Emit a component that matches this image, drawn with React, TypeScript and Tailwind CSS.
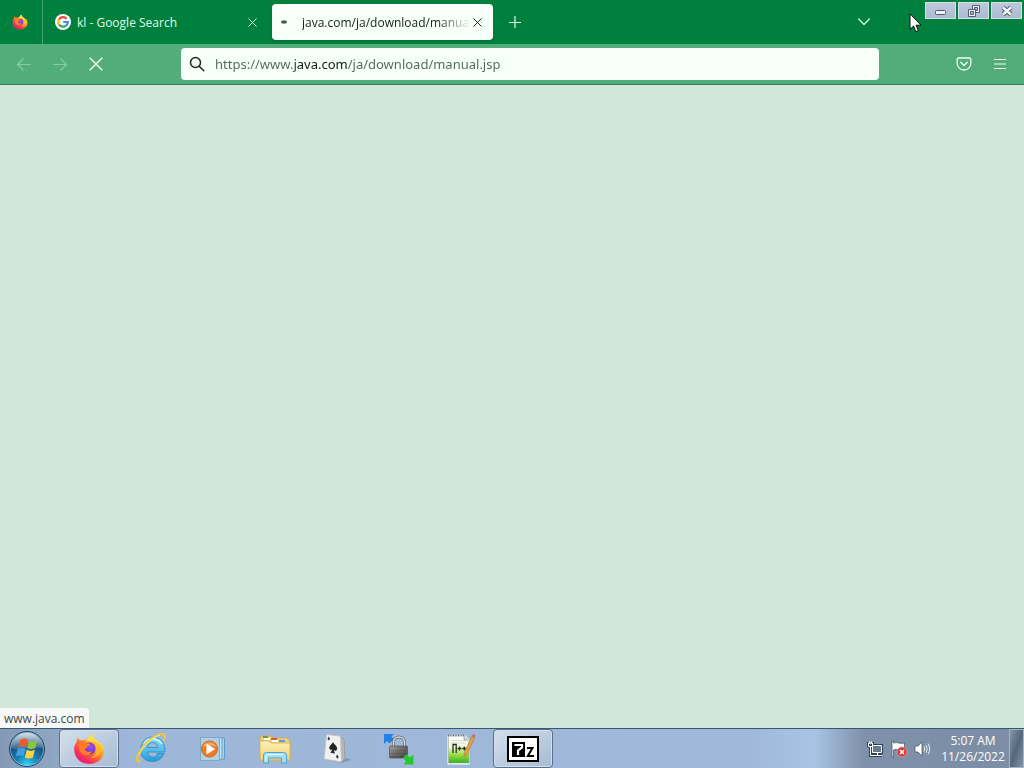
import { useState } from "react";
import type { ReactNode } from "react";

function FirefoxIcon({ className }: { className: string }) {
  return (
    <svg viewBox="0 0 32 32" className={className} aria-hidden="true">
      <defs>
        <linearGradient id="fxBody" x1="0.85" y1="0.1" x2="0.2" y2="0.95">
          <stop offset="0" stopColor="#fff04a" />
          <stop offset="0.3" stopColor="#ffb52a" />
          <stop offset="0.55" stopColor="#ff6a2e" />
          <stop offset="0.8" stopColor="#f5305a" />
          <stop offset="1" stopColor="#e01a80" />
        </linearGradient>
        <radialGradient id="fxGlobe" cx="0.6" cy="0.4" r="0.7">
          <stop offset="0" stopColor="#a04cf0" />
          <stop offset="1" stopColor="#5b34b8" />
        </radialGradient>
      </defs>
      <path
        d="M19.5 1c-.6 2.600.4 4 2.400 5.700C25.200 9 27 10 27.300 12.500c.4-1 .3-2.500 0-3.500 2.700 3 4 6.500 3.700 10C30.300 26 24 31 16.300 31 8 31 1.200 25 1.200 16.500c0-3.200 1-6 2.600-8 0-1.500.5-3 1.400-4 .2 1.300.8 2 1.600 2.600 1.300-.3 2.700-.2 3.800.2 1.500-1 2.800-1.300 4-1.300-.9 1-1.300 1.700-1.200 2.300 1.500-1.600 3.300-5.800 6.100-7.300z"
        fill="url(#fxBody)"
      />
      <circle cx="16.500" cy="15.500" r="6" fill="url(#fxGlobe)" />
      <path
        d="M6.500 9.500c2.500-1.600 5.500-1.400 7.200.8 1.500.2 3 .3 3.800.6-.2 1.300-2 2.200-3 2.700-.3 1.500-1.700 1.900-2.500 2.600 1 3 4.400 3.300 7 1.700-1 3.300-4.400 5.200-7.700 4.100C7 20.500 4.500 15 6.500 9.500z"
        fill="#ff7b2c"
      />
      <path
        d="M18 8.500c4 .8 6 4 5.700 8-.2 4-2.400 7.700-6.400 8.200 5.700 1.300 10-2.700 10.500-8.200C28 10.500 23 9 20.500 5 19.500 6.500 19 7.500 18 8.500z"
        fill="#ffb92d"
        opacity=".85"
      />
      <path d="M14 8c1-2.800 2.800-5.500 5.500-7-.6 2.600.4 4 2.400 5.700C25 9 26.500 10 27.300 12.500 24 9 20 8 14 8z" fill="#ffe042" />
    </svg>
  );
}

function GoogleIcon() {
  return (
    <svg viewBox="0 0 16 16" className="size-4 shrink-0" aria-hidden="true">
      <circle cx="8" cy="8" r="8" fill="#fff" />
      <g fill="none" strokeWidth="2.200">
        <path d="M4 5.500A4.800 4.800 0 0 1 11.600 4.700" stroke="#e94335" />
        <path d="M4 5.500A4.800 4.800 0 0 0 4 10.500" stroke="#f9bc05" />
        <path d="M4 10.500A4.800 4.800 0 0 0 11 11.700" stroke="#34a753" />
        <path d="M11 11.700A4.800 4.800 0 0 0 12.800 8H8.200" stroke="#4285f3" />
      </g>
    </svg>
  );
}

function Cross({ className }: { className: string }) {
  return (
    <svg viewBox="0 0 12 12" className={className} fill="none" stroke="currentColor" strokeWidth="1.300" strokeLinecap="round" aria-hidden="true">
      <path d="M1 1l10 10M11 1L1 11" />
    </svg>
  );
}

function ArrowIcon({ forward = false }: { forward?: boolean }) {
  return (
    <svg viewBox="0 0 16 16" className="size-4" fill="none" stroke="currentColor" strokeWidth="1.200" strokeLinecap="round" strokeLinejoin="round" aria-hidden="true">
      <path d={forward ? "M1.500 8.500h13M9 3L14.500 8.500 9 14" : "M14.500 8.500h-13M7 3L1.500 8.500 7 14"} />
    </svg>
  );
}

function StartOrb() {
  return (
    <svg viewBox="0 0 38 38" className="size-[38px]" aria-hidden="true">
      <defs>
        <radialGradient id="orb" cx="0.5" cy="0.95" r="0.9">
          <stop offset="0" stopColor="#35d5f5" />
          <stop offset="0.35" stopColor="#1680b5" />
          <stop offset="0.7" stopColor="#1c4f7c" />
          <stop offset="1" stopColor="#7596b0" />
        </radialGradient>
        <linearGradient id="orbGloss" x1="0" y1="0" x2="0" y2="1">
          <stop offset="0" stopColor="#fff" stopOpacity=".7" />
          <stop offset="1" stopColor="#b5d3e6" stopOpacity=".2" />
        </linearGradient>
      </defs>
      <circle cx="19" cy="19" r="17.500" fill="url(#orb)" stroke="#22435f" />
      <circle cx="19" cy="19" r="16.500" fill="none" stroke="#a5d4e8" strokeOpacity=".6" />
      <path d="M3.500 18.500C3.500 9 10.500 3 19 3s15.500 6 15.500 15.500c-9-3-22 2-31 0z" fill="url(#orbGloss)" />
      <path d="M12.500 9.500c2.700-1.600 5-1.400 7.300.2l-1.900 7.600c-2.500-1.400-5-1.400-7.700.2z" fill="#ee5a2a" />
      <path d="M21 10.500c2.600 1.500 5.200 1.500 8.300 0l-2 7.500c-2.800 1.500-5.500 1.500-8.100 0z" fill="#8cc63f" />
      <path d="M9.700 19c2.700-1.500 5.200-1.500 7.800 0l-2 7.600c-2.500-1.500-5.100-1.500-7.800 0z" fill="#3f9fe0" />
      <path d="M18.800 19.800c2.600 1.500 5.300 1.500 8.100 0l-2 7.600c-2.800 1.500-5.500 1.500-8.100 0z" fill="#ffd23c" />
    </svg>
  );
}

function ExplorerEIcon() {
  return (
    <svg viewBox="0 0 32 32" className="size-8" fill="none" aria-hidden="true">
      <defs>
        <linearGradient id="ie" x1="0" y1="0" x2="0" y2="1">
          <stop offset="0" stopColor="#8de0fa" />
          <stop offset="1" stopColor="#249bd7" />
        </linearGradient>
      </defs>
      <path d="M29 20.500c-1.500 5-6 8-11.500 8C10.500 28.500 5.500 24 5.500 17S10.500 4 17.500 4 30 9.500 30 17v2H12.500c.5 3.300 2.400 5.200 5.500 5.200 2.300 0 3.800-1.200 4.500-3.700zM12.500 14.500h10.300c-.3-3.200-2.200-5-5.200-5s-4.800 1.900-5.100 5z" fill="url(#ie)" stroke="#2c88bd" strokeWidth=".8" />
      <path d="M9 11c1.500-3 4.500-5 8.500-5s7.500 2 9.500 5" stroke="#cff5ff" strokeWidth="1.300" />
      <path d="M4.500 28c-3 1-3.200-2-.6-7.800C7.500 12.500 17 4 24 1.700c5.500-1.500 7 .8 5 5" stroke="#eac53d" strokeWidth="2.400" strokeLinecap="round" />
      <path d="M4 22C8 13 17 4.500 25 2" stroke="#fff1a0" strokeWidth=".9" />
    </svg>
  );
}

function MediaPlayerIcon() {
  return (
    <svg viewBox="0 0 32 32" className="size-8" aria-hidden="true">
      <path d="M10 5h17.500v21H10z" fill="#a6d5ee" stroke="#5f9dc4" />
      <path d="M7 4.500h18v22H7z" fill="#c7e7f6" stroke="#5f9dc4" />
      <path d="M3.500 4.500h19v23h-19z" fill="#b4cee2" stroke="#79abc8" />
      <circle cx="12.500" cy="16" r="8" fill="#ef7c25" stroke="#c86728" />
      <path d="M5.500 14a7.500 7.500 0 0 1 14 0c-5-2-9-2-14 0z" fill="#ffc388" opacity=".6" />
      <path d="M9.500 10.500v11l8.700-5.500z" fill="#fff" />
    </svg>
  );
}

function FolderIcon() {
  return (
    <svg viewBox="0 0 34 32" className="h-8 w-[34px]" aria-hidden="true">
      <defs>
        <linearGradient id="folder" x1="0" y1="0" x2="0" y2="1">
          <stop offset="0" stopColor="#fff3b5" />
          <stop offset="1" stopColor="#edd07a" />
        </linearGradient>
      </defs>
      <path d="M2 27V4l2-1h9l2 2h14l3 3v19z" fill="#efd07c" stroke="#d0a951" />
      <path d="M5 3h5v2H5z" fill="#5aa646" /><path d="M13 5h6v2h-6z" fill="#d65c38" /><path d="M21 7h6v2h-6z" fill="#5b9fd8" />
      <path d="M6 5h6v2H6zM14 7h6v2h-6z" fill="#fff" />
      <path d="M2 8h9l2 2h19v17H2z" fill="url(#folder)" stroke="#d8b35a" />
      <path d="M5.500 30v-8q0-2.500 3-2.500h17q3 0 3 2.500v8h-5v-5H10.500v5z" fill="#a5def4" stroke="#4ba7cf" />
      <path d="M8 28v-5q0-1.500 2-1.500h15" fill="none" stroke="#e6faff" />
    </svg>
  );
}

function SolitaireIcon() {
  return (
    <svg viewBox="0 0 32 32" className="size-8" aria-hidden="true">
      <path d="M6 27l15 3 9-3-5-2z" fill="#59697a" opacity=".4" />
      <path d="M19 3l4 3 1 20-5 4z" fill="#b6b7bb" stroke="#9a9da3" />
      <path d="M5.500 1.500l14 1.500 1 26L3 26z" fill="#f0f0f1" stroke="#c0c2c6" />
      <path d="M12 9c1.400 3 4.500 4 4.100 7-.3 2-2.300 2.300-3.500 1l1.400 3.500-4.500-.8 1.800-3.200c-1.500.8-3 .2-3-1.700 0-2.500 2.800-3.300 3.700-5.800z" fill="#222" />
      <path d="M6.500 6l1.200-2.500L9 6 7.700 7.500zM15 23.500l1.300-2 1.300 2.500-1.300 2z" fill="#333" />
    </svg>
  );
}

function LockIcon() {
  return (
    <svg viewBox="0 0 32 32" className="size-8" aria-hidden="true">
      <defs>
        <linearGradient id="lock" x1="0" y1="0" x2="1" y2="1">
          <stop offset="0" stopColor="#a5a19c" />
          <stop offset="0.5" stopColor="#625e5b" />
          <stop offset="1" stopColor="#383838" />
        </linearGradient>
      </defs>
      <path d="M1 1h10l-2.500 2.500L11 6 6.500 10.500 4 8l-3 3z" fill="#2282e8" />
      <path d="M10.500 14V9.500c0-7.500 11-7.500 11 0V14" fill="none" stroke="#6c7073" strokeWidth="3" />
      <path d="M10.500 14V9.500c0-7.500 11-7.500 11 0V14" fill="none" stroke="#d2d5d7" strokeWidth="1.500" />
      <rect x="6.500" y="13" width="18" height="12" rx="1" fill="url(#lock)" stroke="#57524e" strokeWidth=".7" />
      <path d="M7 16h17M7 19h17M7 22h17" stroke="#bcb6ae" strokeOpacity=".25" />
      <path d="M30.500 31.500H20.500l2.500-3-3-3.500 3.500-4 3.500 3.500 3.500-3z" fill="#26c735" />
    </svg>
  );
}

function NotepadIcon() {
  return (
    <svg viewBox="0 0 32 32" className="size-8" aria-hidden="true">
      <defs>
        <linearGradient id="npp" x1="0" y1="0" x2="0" y2="1">
          <stop offset="0" stopColor="#fff" />
          <stop offset="0.4" stopColor="#f2f9dc" />
          <stop offset="0.7" stopColor="#98dc3f" />
          <stop offset="1" stopColor="#32b128" />
        </linearGradient>
      </defs>
      <path d="M2.500 2.500h18l4 4v25h-22z" fill="#fff" />
      <path d="M3.500 3h17l3.500 3.500V30H3.500z" fill="url(#npp)" stroke="#9aa98a" strokeWidth=".6" />
      <path d="M3 2.500h17" stroke="#666" strokeWidth="1.500" strokeDasharray="1 1.500" />
      <path d="M6 7.500h15M6 10h14" stroke="#c4ccd0" strokeWidth=".6" />
      <path d="M19 2.500v4.500h4.500" fill="#cfd4dc" stroke="#8e959c" strokeWidth=".7" />
      <path d="M8 20v-8.500h3.200V20M12.500 15.500h4M14.500 13.500v4M17.300 15.500h4M19.300 13.500v4" fill="none" stroke="#242e20" strokeWidth="1.300" />
      <path d="M27 3l2.500 1.500-7.500 17-3 2.500.2-4z" fill="#e2a443" stroke="#a87b3c" strokeWidth=".7" />
      <path d="M27 3l1-2 2.700 1.500-1.200 2z" fill="#c86d61" />
    </svg>
  );
}

function SevenZipIcon() {
  return (
    <svg viewBox="0 0 32 26" className="h-[26px] w-8" aria-hidden="true">
      <path d="M0 0h32v26H0z" />
      <path d="M2 2h28v22H2z" fill="#fff" />
      <path d="M5 6h13v15H5z" />
      <path d="M7.500 9h7.500v2.500l-4 3v4.500" fill="none" stroke="#fff" strokeWidth="2.200" />
      <path d="M20 12h5.500L20.800 20H27" fill="none" stroke="#000" strokeWidth="2" />
    </svg>
  );
}

function CaptionButton({ label, children }: { label: string; children: ReactNode }) {
  return (
    <button aria-label={label} className="flex h-[17px] w-[31px] items-center justify-center border border-[#d8dfeb] bg-linear-to-b from-[#bcc8dc] to-[#adbad0]">
      <svg viewBox="0 0 14 12" className="h-3 w-3.5" fill="none" aria-hidden="true">{children}</svg>
    </button>
  );
}

const tasks: { name: string; icon: ReactNode; open?: boolean }[] = [
  { name: "Firefox", icon: <FirefoxIcon className="size-8" />, open: true },
  { name: "Internet Explorer", icon: <ExplorerEIcon /> },
  { name: "Media Player", icon: <MediaPlayerIcon /> },
  { name: "File Explorer", icon: <FolderIcon /> },
  { name: "Solitaire", icon: <SolitaireIcon /> },
  { name: "Connection lock", icon: <LockIcon /> },
  { name: "Notepad++", icon: <NotepadIcon /> },
  { name: "7-Zip", icon: <SevenZipIcon />, open: true },
];

function TabBar() {
  return (
    <header className="relative flex h-11 items-center bg-[#00803d] text-xs text-[#e0fbea]">
      <button aria-label="Firefox View" className="flex h-full w-[43px] items-center justify-center border-r border-[#42a56e] pr-0.5">
        <FirefoxIcon className="size-4" />
      </button>
      <div className="flex w-[229px] items-center gap-1.5 pr-3.5 pl-3">
        <GoogleIcon />
        <a href="#search" className="grow truncate pt-0.5">kl - Google Search</a>
        <button aria-label="Close Google Search tab" className="flex size-3 items-center justify-center">
          <Cross className="size-[9px]" />
        </button>
      </div>
      <div className="flex h-9 w-[221px] items-center rounded bg-[#f7fff9] pr-2.5 pl-2 text-[#152019] shadow-sm">
        <svg viewBox="0 0 8 4" className="h-1 w-2 shrink-0" aria-hidden="true"><ellipse cx="4" cy="2" rx="3" ry="1.700" fill="#505b55" /></svg>
        <a href="#manual" className="ml-3.5 grow overflow-hidden pt-0.5 whitespace-nowrap mask-r-from-80% mask-r-to-100%">java.com/ja/download/manual.jsp</a>
        <button aria-label="Close java.com tab" className="flex size-3 shrink-0 items-center justify-center">
          <Cross className="size-[9px]" />
        </button>
      </div>
      <button aria-label="New tab" className="ml-2 flex size-7 items-center justify-center">
        <svg viewBox="0 0 12 12" className="size-3" stroke="currentColor" strokeWidth="1.200" aria-hidden="true"><path d="M6 0v12M0 6.500h12" /></svg>
      </button>
      <button aria-label="List all tabs" className="mr-[146px] ml-auto flex size-7 items-center justify-center">
        <svg viewBox="0 0 12 8" className="h-2 w-3" fill="none" stroke="currentColor" strokeWidth="1.200" strokeLinecap="round" strokeLinejoin="round" aria-hidden="true"><path d="M.7 1L6 6.500 11.300 1" /></svg>
      </button>
      <div className="absolute top-0.5 right-0.5 flex gap-0.5">
        <CaptionButton label="Minimize">
          <rect x="1.500" y="5.500" width="10" height="4" rx="1" fill="#eef2f8" stroke="#515c74" />
        </CaptionButton>
        <CaptionButton label="Restore">
          <path d="M5.500.5h7v7h-7z" fill="#eef2f8" stroke="#515c74" />
          <path d="M7.500 2.500h3v3h-3z" fill="#a9b6cc" stroke="#515c74" />
          <path d="M1.500 4.500h7v7h-7z" fill="#eef2f8" stroke="#515c74" />
          <path d="M3.500 6.500h3v3h-3z" fill="#a9b6cc" stroke="#515c74" />
        </CaptionButton>
        <CaptionButton label="Close">
          <path d="M3 2.500l8 7M11 2.500l-8 7" stroke="#515c74" strokeWidth="4.400" />
          <path d="M3 2.500l8 7M11 2.500l-8 7" stroke="#f4f6fb" strokeWidth="2.400" />
        </CaptionButton>
      </div>
      <svg viewBox="0 0 13 20" className="absolute top-[13px] right-[102px] h-5 w-[13px]" aria-hidden="true">
        <path d="M1 .8v15.500l3.500-3.300 2.400 5.700 2.500-1.100L7 12.200h5z" fill="#fff" stroke="#111" />
      </svg>
    </header>
  );
}

function Toolbar() {
  const [url, setUrl] = useState("https://www.java.com/ja/download/manual.jsp");
  return (
    <nav className="flex h-[41px] items-center border-b border-[#327f57] bg-[#52ad7a] text-[#effff4]">
      <div className="flex gap-2 pl-2.5 text-[#86cba3]">
        <button aria-label="Back" className="flex size-7 items-center justify-center"><ArrowIcon /></button>
        <button aria-label="Forward" className="flex size-7 items-center justify-center"><ArrowIcon forward /></button>
        <button aria-label="Stop" className="flex size-7 items-center justify-center text-[#effff4]"><Cross className="size-3.5" /></button>
      </div>
      <div className="mx-[71px] flex h-8 grow items-center rounded bg-[#f7fff9] px-2">
        <svg viewBox="0 0 16 16" className="size-4 shrink-0" fill="none" stroke="#202823" strokeWidth="1.500" strokeLinecap="round" aria-hidden="true">
          <circle cx="6.500" cy="6.500" r="5" /><path d="M10.200 10.200l4.600 4.600" />
        </svg>
        <input
          aria-label="Address"
          value={url}
          onChange={(event) => setUrl(event.target.value)}
          className="ml-2.5 min-w-0 grow bg-[linear-gradient(90deg,#52675b_80px,#111a15_80px,#111a15_132px,#52675b_132px)] bg-clip-text pt-0.5 font-['Noto_Sans','Open_Sans',sans-serif] text-[13px] text-transparent caret-black outline-none"
        />
      </div>
      <div className="flex gap-2 pr-2.5">
        <button aria-label="Save to Pocket" className="flex size-7 items-center justify-center">
          <svg viewBox="0 0 16 16" className="size-4" fill="none" stroke="currentColor" strokeWidth="1.300" strokeLinecap="round" strokeLinejoin="round" aria-hidden="true">
            <path d="M2.700 2h10.600q1.500 0 1.500 1.500V7.500a6.800 6.500 0 0 1-13.600 0v-4Q1.200 2 2.700 2zM4.700 6.300L8 9.500l3.300-3.200" />
          </svg>
        </button>
        <button aria-label="Application menu" className="flex size-7 items-center justify-center">
          <svg viewBox="0 0 14 12" className="h-3 w-3.5" stroke="currentColor" strokeWidth="1.200" aria-hidden="true"><path d="M1 1.500h12M1 6h12M1 10.500h12" /></svg>
        </button>
      </div>
    </nav>
  );
}

function Tray() {
  return (
    <div className="ml-auto flex h-full items-center text-xs text-white">
      <button aria-label="Network" className="flex w-6 justify-center">
        <svg viewBox="0 0 18 18" className="size-[18px]" fill="none" aria-hidden="true">
          <path d="M6.500 5.500h9v7h-9zM9 15.500h7M11.500 12v3.500M4.500 7v8.500H9M2.500 2v4h4V2" stroke="#2f4258" strokeWidth="3" />
          <path d="M6.500 5.500h9v7h-9z" fill="#66798f" stroke="#fff" />
          <path d="M8 15.500h8M11.500 12.500v3M4.500 7v8.500H9M2.500 3v3.500h4V3zM3.500 1.500v2M5.500 1.500v2" stroke="#fff" />
        </svg>
      </button>
      <button aria-label="Action Center" className="flex w-6 justify-center">
        <svg viewBox="0 0 18 18" className="size-[18px]" aria-hidden="true">
          <path d="M2 1v16h1.500V10c4-2 6 1.500 11 0V3c-4 1.500-7-1.500-11 0V1z" fill="#fff" stroke="#3d5067" strokeWidth=".7" />
          <circle cx="12" cy="12" r="5" fill="#d33b38" stroke="#f0a19a" strokeWidth=".7" />
          <path d="M10 10l4 4M14 10l-4 4" stroke="#fff" strokeWidth="1.500" />
        </svg>
      </button>
      <button aria-label="Volume" className="flex w-6 justify-center">
        <svg viewBox="0 0 18 18" className="size-[18px]" fill="none" aria-hidden="true">
          <path d="M1 6h3l4-4v14l-4-4H1z" fill="#fff" stroke="#4c5d70" strokeWidth=".8" />
          <path d="M10 6.500q1.500 2.500 0 5M12 5q2.500 4 0 8M14 3.500q3.500 5.500 0 11" stroke="#e6edf4" />
        </svg>
      </button>
      <div className="ml-1.5 w-16 text-center leading-4">
        <time className="block">5:07 AM</time>
        <time className="block">11/26/2022</time>
      </div>
      <button aria-label="Show desktop" className="ml-1 h-full w-[15px] border border-[#a7b4c3] bg-linear-to-br from-[#8996a6] via-[#54677d] to-[#8594a7]" />
    </div>
  );
}

export default function App() {
  return (
    <div className="flex min-h-screen flex-col bg-[#d1e7da] font-['Open_Sans','Noto_Sans',sans-serif]">
      <TabBar />
      <Toolbar />
      <main className="relative grow">
        <div role="status" className="absolute bottom-0 left-0 h-5 rounded-tr-sm bg-[#f7faf8] px-1 text-xs leading-[22px] text-[#3f4541]">www.java.com</div>
      </main>
      <footer className="flex h-10 items-center border-t border-[#385574] bg-[linear-gradient(90deg,#8499b4_0,#9eb7d8_130px,#a0b9db_calc(100%-270px),#a8c4e5_calc(100%-210px),#7f91aa_calc(100%-160px),#7c8da5_100%)]">
        <button aria-label="Start" className="ml-2 flex h-full w-[38px] items-center justify-center"><StartOrb /></button>
        <div className="ml-[13px] flex h-full gap-0.5">
          {tasks.map((task) => (
            <button
              key={task.name}
              aria-label={task.name}
              className={`flex h-full w-[60px] items-center justify-center ${task.open ? "rounded-sm border border-[#596e8b] bg-linear-to-br from-[#d4dfeb] to-[#a7bbd3] shadow-[inset_0_0_0_1px_#d5e0ed]" : ""}`}
            >
              {task.icon}
            </button>
          ))}
        </div>
        <Tray />
      </footer>
    </div>
  );
}
